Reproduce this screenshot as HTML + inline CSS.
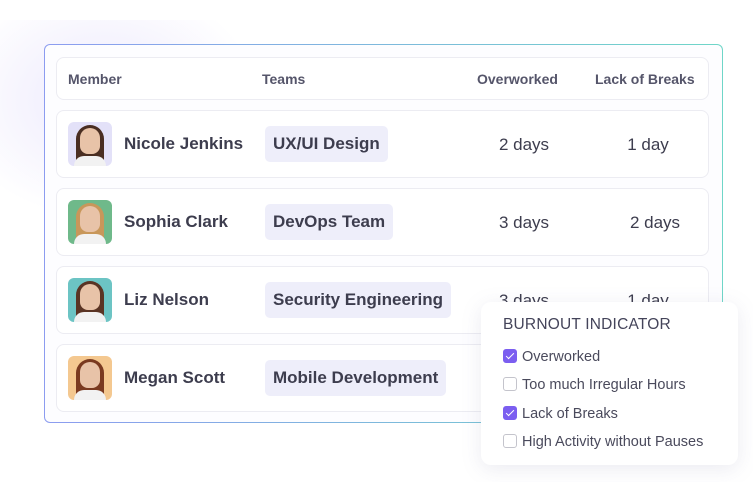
<!DOCTYPE html>
<html><head><style>
*{margin:0;padding:0;box-sizing:border-box}
body{width:753px;height:482px;background:#fff;font-family:"Liberation Sans",sans-serif;position:relative;overflow:hidden;color:#3d3d4d}
.glow{position:absolute;left:0;top:20px;width:260px;height:200px;background:radial-gradient(ellipse at 40% 40%,rgba(200,190,250,.35),rgba(255,255,255,0) 70%)}
.frame{position:absolute;left:44px;top:44px;width:679px;height:379px;border-radius:6px;padding:1px;background:linear-gradient(90deg,#8c9cf0,#6fd6c8)}
.frame .in{width:100%;height:100%;background:#fdfdff;border-radius:5px}
.row{position:absolute;left:56px;width:653px;background:#fff;border:1px solid #ececf2;border-radius:8px}
.hdr{top:57px;height:43px;font-size:14px;color:#55556a;font-weight:bold}
.hdr span{position:absolute;top:13px}
.r{height:68px}
.av{position:absolute;left:11px;top:11px;width:44px;height:44px;border-radius:6px;overflow:hidden}
.av .h{position:absolute;left:12px;top:6px;width:20px;height:26px;border-radius:10px 10px 8px 8px;background:#e8c3a8}
.av .hair{position:absolute;left:8px;top:3px;width:28px;height:42px;border-radius:14px 14px 4px 4px}
.av .b{position:absolute;left:6px;top:34px;width:32px;height:14px;border-radius:10px 10px 0 0;background:#f2f2f2}
.nm{position:absolute;left:67px;top:23px;font-size:17px;font-weight:bold;color:#3d3d4e}
.pill{position:absolute;left:208px;top:15px;height:36px;padding:0 8px;line-height:36px;background:#eeeefa;border-radius:5px;font-size:17px;font-weight:bold;color:#3d3d4e}
.d{position:absolute;top:24px;font-size:17px;color:#3d3d4e;text-align:center;width:100px}
.pop{position:absolute;left:481px;top:302px;width:257px;height:163px;background:#fff;border-radius:10px;box-shadow:0 4px 20px rgba(120,120,160,.15)}
.pop h4{position:absolute;left:22px;top:14px;font-size:15.5px;font-weight:normal;color:#44445a;letter-spacing:.2px}
.it{position:absolute;left:22px;font-size:14.5px;color:#4a4a5c}
.cb{display:inline-block;width:14px;height:14px;border:1px solid #c4c4cc;border-radius:3px;vertical-align:-2px;margin-right:5px;position:relative}
.cb.on{background:#7b5ef0;border-color:#7b5ef0}
.cb.on:after{content:"";position:absolute;left:4px;top:1px;width:3px;height:7px;border:solid #fff;border-width:0 1.5px 1.5px 0;transform:rotate(45deg)}
</style></head><body>
<div class="glow"></div>
<div class="frame"><div class="in"></div></div>
<div class="row hdr"><span style="left:11px">Member</span><span style="left:205px">Teams</span><span style="left:420px">Overworked</span><span style="left:538px">Lack of Breaks</span></div>

<div class="row r" style="top:110px"><div class="av" style="background:#e3e1f8"><div class="hair" style="background:#4a2e22"></div><div class="h"></div><div class="b"></div></div><div class="nm">Nicole Jenkins</div><div class="pill">UX/UI Design</div><div class="d" style="left:417px">2 days</div><div class="d" style="left:541px">1 day</div></div>
<div class="row r" style="top:188px"><div class="av" style="background:#6fb98a"><div class="hair" style="background:#c8975a"></div><div class="h"></div><div class="b"></div></div><div class="nm">Sophia Clark</div><div class="pill">DevOps Team</div><div class="d" style="left:417px">3 days</div><div class="d" style="left:548px">2 days</div></div>
<div class="row r" style="top:266px"><div class="av" style="background:#6cc4c4"><div class="hair" style="background:#5a3424"></div><div class="h"></div><div class="b"></div></div><div class="nm">Liz Nelson</div><div class="pill">Security Engineering</div><div class="d" style="left:417px">3 days</div><div class="d" style="left:541px">1 day</div></div>
<div class="row r" style="top:344px"><div class="av" style="background:#f4c890"><div class="hair" style="background:#7a3a20"></div><div class="h"></div><div class="b"></div></div><div class="nm">Megan Scott</div><div class="pill">Mobile Development</div></div>

<div class="pop"><h4>BURNOUT INDICATOR</h4>
<div class="it" style="top:47px"><span class="cb on"></span>Overworked</div>
<div class="it" style="top:75px"><span class="cb"></span>Too much Irregular Hours</div>
<div class="it" style="top:104px"><span class="cb on"></span>Lack of Breaks</div>
<div class="it" style="top:132px"><span class="cb"></span>High Activity without Pauses</div>
</div>
</body></html>
